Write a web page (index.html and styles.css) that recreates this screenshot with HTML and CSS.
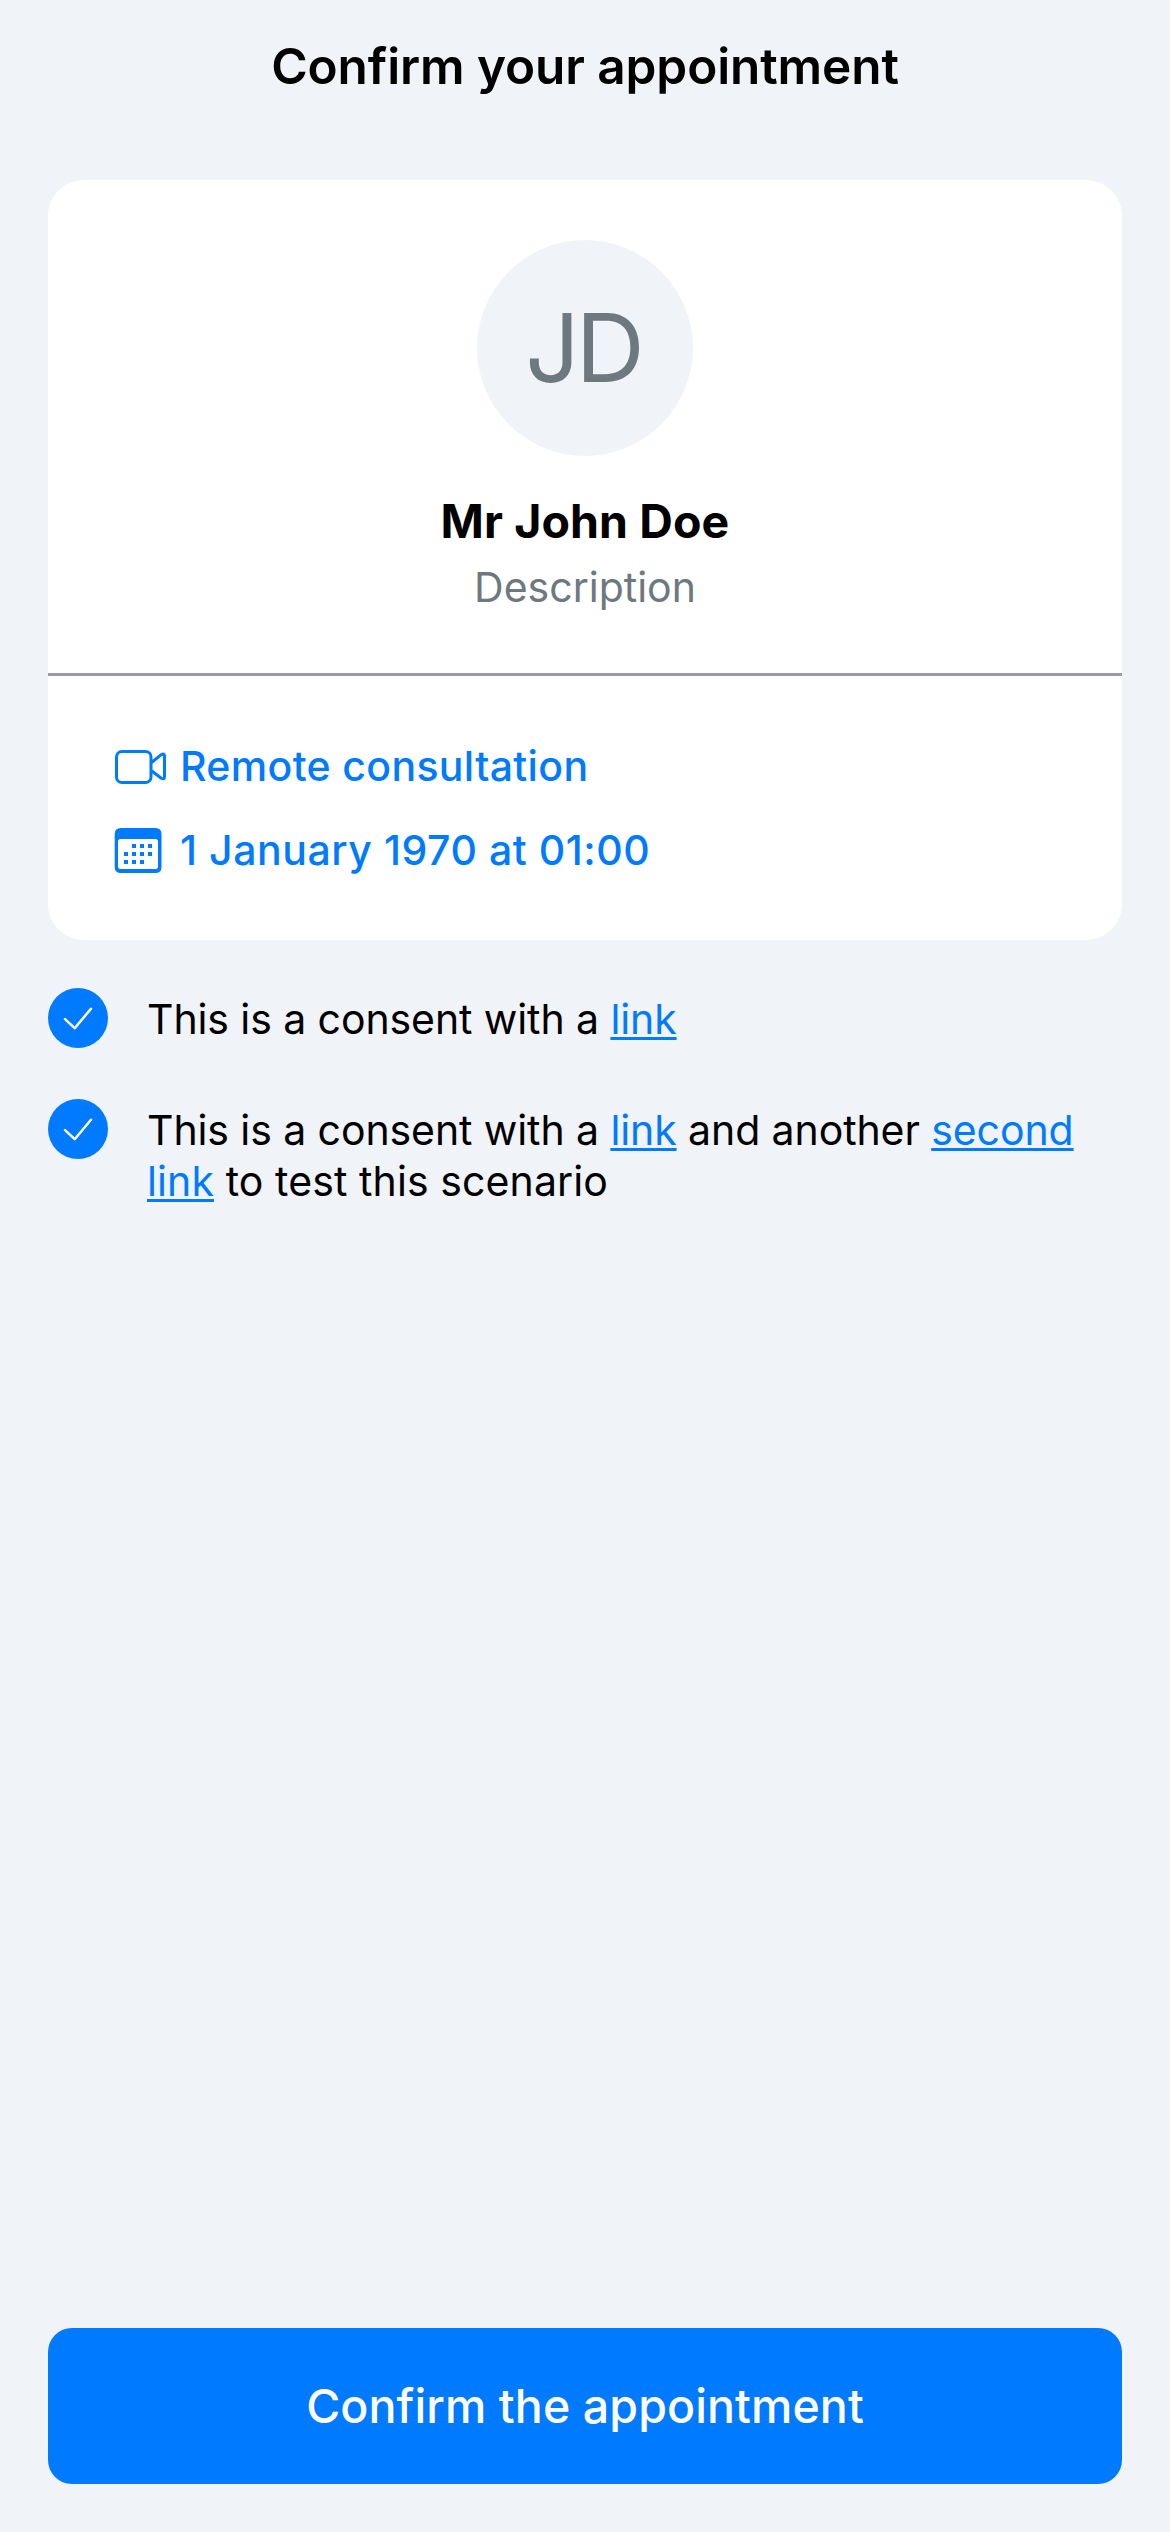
FILE: index.html
```html
<!DOCTYPE html>
<html lang="en">
<head>
<meta charset="utf-8">
<meta name="viewport" content="width=device-width">
<title>Confirm your appointment</title>
<link rel="stylesheet" href="styles.css">
</head>
<body>
<header class="header"><h1 class="title">Confirm your appointment</h1></header>
<main class="content">
  <section class="card">
    <div class="profile">
      <div class="avatar"><span class="initials">JD</span></div>
      <h2 class="name">Mr John Doe</h2>
      <p class="description">Description</p>
    </div>
    <div class="details">
      <div class="detail">
        <svg class="icon" viewBox="0 0 54 48" fill="none" stroke="currentColor" stroke-width="3" stroke-linejoin="round"><rect x="2.5" y="9.5" width="34.5" height="31" rx="5.500"/><path d="M37.500 20.500L47.300 12.700Q50.500 10.800 50.500 14V34.500Q50.500 38 47.300 36.300L37.500 28.800"/></svg>
        <span class="detail-text remote">Remote consultation</span>
      </div>
      <div class="detail">
        <svg class="icon" viewBox="0 0 54 48" fill="currentColor"><path fill-rule="evenodd" d="M7 2H41.500Q47.500 2 47.500 8V41Q47.500 47 41.500 47H7Q.7 47 .7 41V8Q.7 2 7 2ZM6.500 13Q4 13 4 15.500V40.500Q4 43 6.500 43H41.500Q44 43 44 40.500V15.500Q44 13 41.500 13Z"/><path d="M18 18h4v4h-4zm8 0h4v4h-4zm8 0h4v4h-4zM10 26h4v4h-4zm8 0h4v4h-4zm8 0h4v4h-4zm8 0h4v4h-4zM10 34h4v4h-4zm8 0h4v4h-4zm8 0h4v4h-4z"/></svg>
        <span class="detail-text date">1 January 1970 at 01:00</span>
      </div>
    </div>
  </section>
  <div class="consent">
    <svg class="check" viewBox="0 0 60 60"><circle cx="30" cy="30" r="30" fill="currentColor"/><path d="M17 31.200L26.700 40.200L43 20.700" fill="none" stroke="#fff" stroke-width="2.500" stroke-linecap="round" stroke-linejoin="round"/></svg>
    <p class="consent-text"><span class="line first">This is a consent with a <a class="link">link</a></span></p>
  </div>
  <div class="consent">
    <svg class="check" viewBox="0 0 60 60"><circle cx="30" cy="30" r="30" fill="currentColor"/><path d="M17 31.200L26.700 40.200L43 20.700" fill="none" stroke="#fff" stroke-width="2.500" stroke-linecap="round" stroke-linejoin="round"/></svg>
    <p class="consent-text"><span class="line second">This is a consent with a <a class="link">link</a> and another <a class="link">second</a></span><span class="line third"><a class="link">link</a> to test this scenario</span></p>
  </div>
</main>
<footer class="footer"><button class="confirm"><span class="confirm-text">Confirm the appointment</span></button></footer>
</body>
</html>
```
FILE: styles.css
```css
*{box-sizing:border-box}
body{margin:0;height:2532px;display:flex;flex-direction:column;background:#f0f4f9;color:#000;font-family:Inter,"Liberation Sans",sans-serif}
h1,h2,p{margin:0}
.header{height:180px;padding-top:33px;text-align:center}
.title{font-size:49.5px;line-height:66px;font-weight:600;letter-spacing:-.1px}
.content{flex:1;padding:0 48px}
.card{height:760px;background:#fff;border-radius:36px;margin-bottom:48px}
.profile{height:496px;border-bottom:3px solid #989ca0;display:flex;flex-direction:column;align-items:center;padding-top:60px}
.avatar{width:216px;height:216px;border-radius:50%;background:#f0f4f9;color:#6e787f;display:flex;align-items:center;justify-content:center;font-size:95.5px;letter-spacing:-4px;padding:0 4px 2px 0}
.name{font-size:46.5px;line-height:60px;font-weight:700;letter-spacing:.1px;margin-top:35px}
.description{font-size:41px;line-height:54px;color:#6e787f;margin-top:9px}
.details{padding:63px 66px 0;color:#007aff}
.detail{height:54px;display:flex;align-items:center;gap:12px;margin-bottom:30px}
.icon{width:54px;height:48px;flex:none}
.detail-text{font-size:41px;line-height:54px;font-weight:500;white-space:nowrap}
.remote{letter-spacing:.35px}
.date{letter-spacing:.55px}
.consent{display:flex;gap:39px;margin-bottom:51px}
.check{width:60px;height:60px;flex:none;color:#007aff}
.consent-text{font-size:41px;line-height:51px;padding-top:6px}
.line{display:block;white-space:nowrap}
.first,.second{letter-spacing:-.09px}
.third{letter-spacing:.1px}
.link{color:#007aff;text-decoration:underline;text-decoration-thickness:3px;text-underline-offset:3px;text-decoration-skip-ink:none}
.footer{padding:0 48px 48px}
.confirm{display:flex;align-items:center;justify-content:center;width:100%;height:156px;padding:0;border:0;border-radius:24px;background:#007aff;color:#fff;font:500 46.5px Inter,sans-serif;letter-spacing:.1px}
```
